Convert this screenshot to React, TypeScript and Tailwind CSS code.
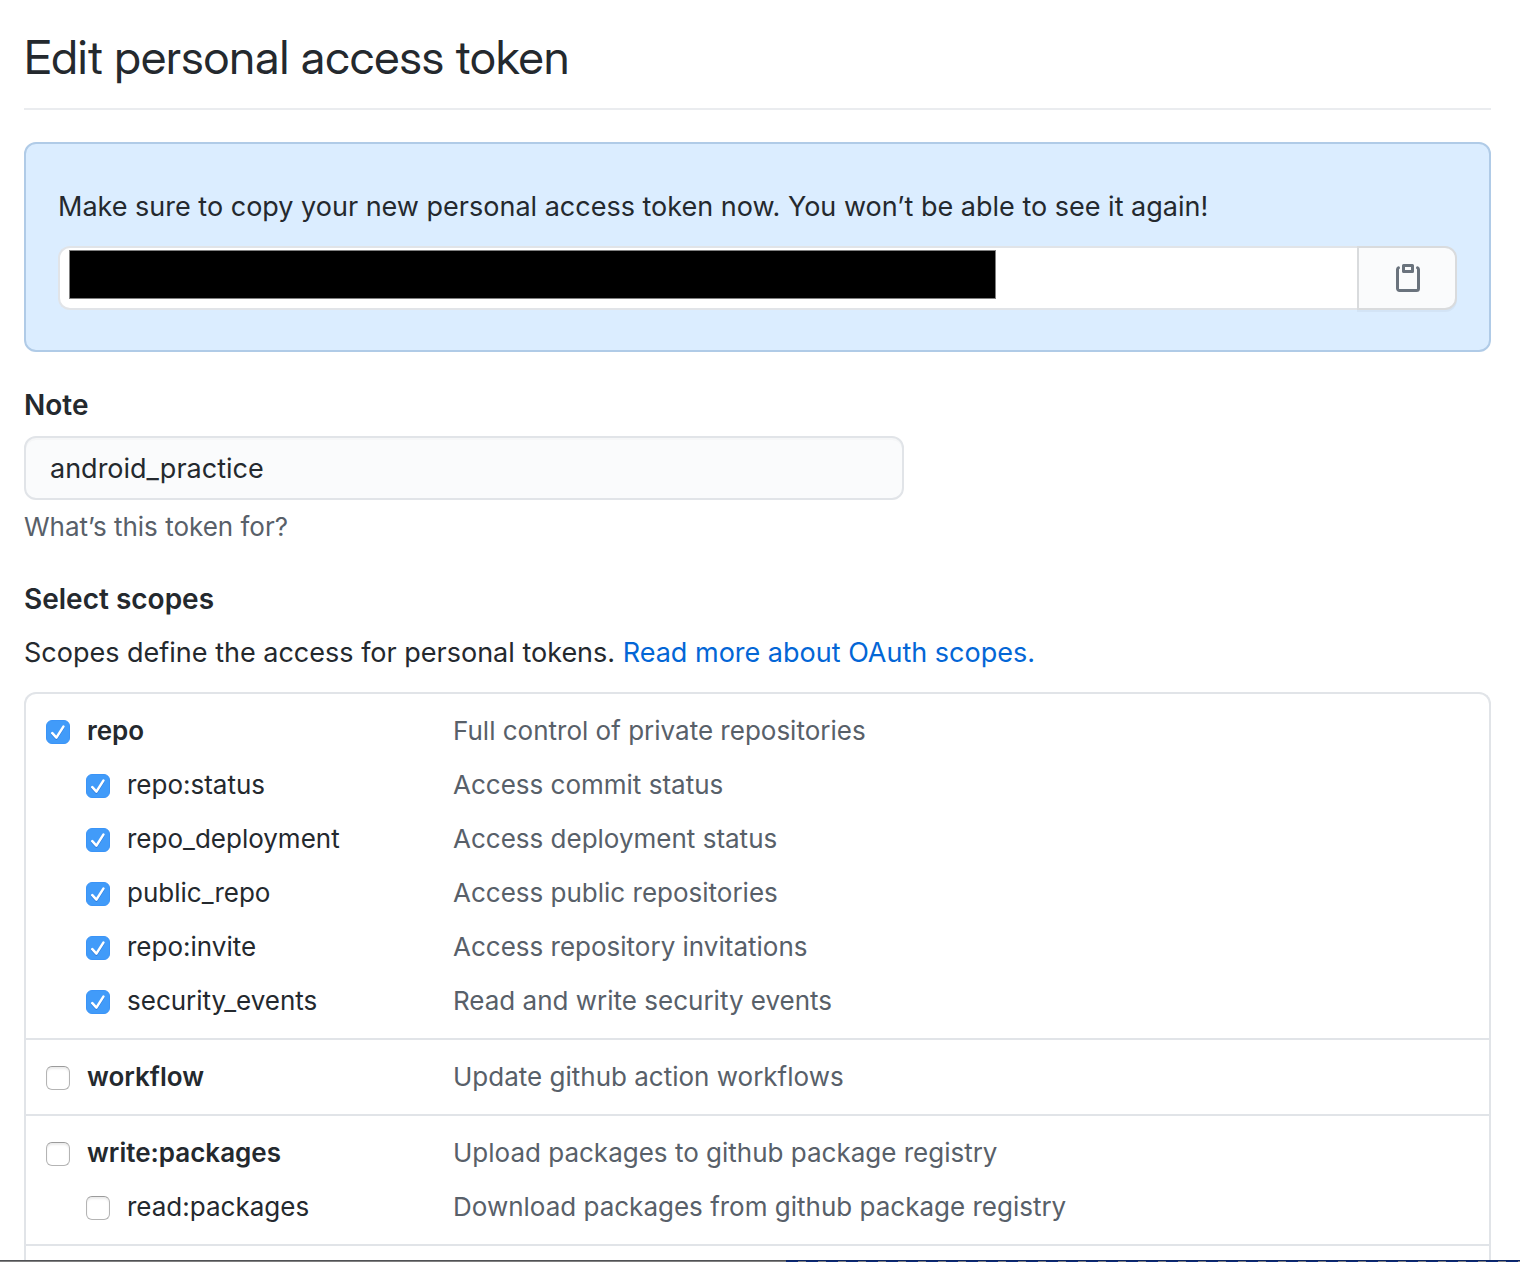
import { useId } from "react";

type Scope = { name: string; description: string; checked?: boolean };
type ScopeGroup = Scope & { children?: Scope[] };

const groups: ScopeGroup[] = [
  {
    name: "repo",
    description: "Full control of private repositories",
    checked: true,
    children: [
      { name: "repo:status", description: "Access commit status", checked: true },
      { name: "repo_deployment", description: "Access deployment status", checked: true },
      { name: "public_repo", description: "Access public repositories", checked: true },
      { name: "repo:invite", description: "Access repository invitations", checked: true },
      { name: "security_events", description: "Read and write security events", checked: true },
    ],
  },
  { name: "workflow", description: "Update github action workflows" },
  {
    name: "write:packages",
    description: "Upload packages to github package registry",
    children: [{ name: "read:packages", description: "Download packages from github package registry" }],
  },
];

function ClipboardIcon() {
  return (
    <svg viewBox="0 0 16 16" className="size-8 fill-[#6a737d]" aria-hidden="true">
      <path
        fillRule="evenodd"
        d="M5.75 1a.75.75 0 00-.75.75v3c0 .414.336.75.75.75h4.5a.75.75 0 00.75-.75v-3a.75.75 0 00-.75-.75h-4.5zm.75 3V2.5h3V4h-3zm-2.874-.467a.75.75 0 00-.752-1.298A1.75 1.75 0 002 3.75v9.5c0 .966.784 1.75 1.75 1.75h8.5A1.75 1.75 0 0014 13.25v-9.5a1.75 1.75 0 00-.874-1.515.75.75 0 10-.752 1.298.25.25 0 01.126.217v9.5a.25.25 0 01-.25.25h-8.5a.25.25 0 01-.25-.25v-9.5a.25.25 0 01.126-.217z"
      />
    </svg>
  );
}

function Checkbox({ id, checked }: { id: string; checked?: boolean }) {
  return (
    <span className="mt-0.5 grid size-6 shrink-0 place-items-center">
      <input
        id={id}
        type="checkbox"
        defaultChecked={checked}
        className="peer col-start-1 row-start-1 size-6 appearance-none rounded-md border border-[#b4b4b4] border-t-[#9b9b9b] bg-white shadow-[inset_0_2px_2px_rgba(0,0,0,0.08)] checked:border-[#3b94f7] checked:bg-[#419bf9] checked:shadow-none"
      />
      <svg
        viewBox="0 0 24 24"
        className="pointer-events-none invisible col-start-1 row-start-1 size-6 fill-none stroke-white stroke-[2.5] drop-shadow-[0_1px_0_rgba(0,60,160,0.35)] peer-checked:visible"
        strokeLinecap="round"
        strokeLinejoin="round"
        aria-hidden="true"
      >
        <path d="M6.3 13.2L10.4 17.6L17.4 6.6" />
      </svg>
    </span>
  );
}

function ScopeRow({ scope, nested }: { scope: Scope; nested?: boolean }) {
  const id = useId();
  return (
    <div className="grid grid-cols-[407px_1fr] items-center text-[26px] leading-[54px]">
      <div className={nested ? "flex items-center gap-[17px] pl-10" : "flex items-center gap-[17px]"}>
        <Checkbox id={id} checked={scope.checked} />
        <label htmlFor={id} className={nested ? "" : "font-semibold"}>
          {scope.name}
        </label>
      </div>
      <span className="text-[#586069]">{scope.description}</span>
    </div>
  );
}

export default function App() {
  return (
    <div className="flex h-screen flex-col overflow-hidden bg-white font-['Inter',sans-serif] text-[#24292e]">
      <main className="min-h-0 flex-1 overflow-hidden pt-5 pr-[29px] pl-6">
        <h1 className="border-b-2 border-[#eaecef] pb-3.5 font-['Inter_Display','Inter',sans-serif] text-[47px] leading-[74px]">
          Edit personal access token
        </h1>

        <section className="mt-8 rounded-xl border-2 border-[#b0cbe7] bg-[#dbedff] px-8 pt-[42px] pb-10">
          <label htmlFor="token" className="block text-[27px] leading-[42px]">
            Make sure to copy your new personal access token now. You won’t be able to see it again!
          </label>
          <div className="mt-[18px] flex h-16">
            <div className="relative min-w-0 flex-1">
              <input
                id="token"
                type="text"
                readOnly
                className="h-16 w-full rounded-l-xl border-2 border-r-0 border-[#e1e4e8] bg-white px-6 text-[27px]"
              />
              <span className="absolute top-1 left-[11px] h-[49px] w-[927px] max-w-[90%] border border-[#808080] bg-black" />
            </div>
            <button
              type="button"
              aria-label="Copy token"
              className="flex w-[100px] items-center justify-center rounded-r-xl border-2 border-[#d9dbdd] bg-[#fafbfc] pl-0.5 shadow-[0_2px_0_rgba(27,31,35,0.04)]"
            >
              <ClipboardIcon />
            </button>
          </div>
        </section>

        <div className="mt-8 flex flex-col">
          <label htmlFor="note" className="text-[28px] leading-[42px] font-semibold">
            Note
          </label>
          <input
            id="note"
            type="text"
            defaultValue="android_practice"
            className="mt-2.5 h-16 w-[880px] max-w-full rounded-xl border-2 border-[#e1e4e8] bg-[#fafbfc] px-6 text-[27px] shadow-[inset_0_2px_0_rgba(225,228,232,0.2)]"
          />
          <p className="mt-2 text-[26px] leading-[38px] text-[#586069]">What’s this token for?</p>
        </div>

        <h2 className="mt-8 text-[28px] leading-[42px] font-semibold">Select scopes</h2>
        <p className="mt-3 text-[27px] leading-[42px]">
          Scopes define the access for personal tokens.{" "}
          <a href="#scopes" className="text-[#0366d6]">
            Read more about OAuth scopes.
          </a>
        </p>

        <div id="scopes" className="mt-[18px] rounded-t-xl border-2 border-b-0 border-[#e1e4e8]">
          {groups.map((group) => (
            <div key={group.name} className="border-b-2 border-[#e1e4e8] px-5 py-2.5">
              <ScopeRow scope={group} />
              {group.children?.map((child) => (
                <ScopeRow key={child.name} scope={child} nested />
              ))}
            </div>
          ))}
          <div className="h-16" />
        </div>
      </main>

      <div className="flex h-0.5 shrink-0">
        <div className="w-[786px] border-t border-[#505255] bg-[#808080]" />
        <div className="flex-1 border-t border-[#0a2464] bg-[repeating-linear-gradient(90deg,#0c2a78_0,#0c2a78_12px,#808080_12px,#808080_20px)]" />
      </div>
    </div>
  );
}
